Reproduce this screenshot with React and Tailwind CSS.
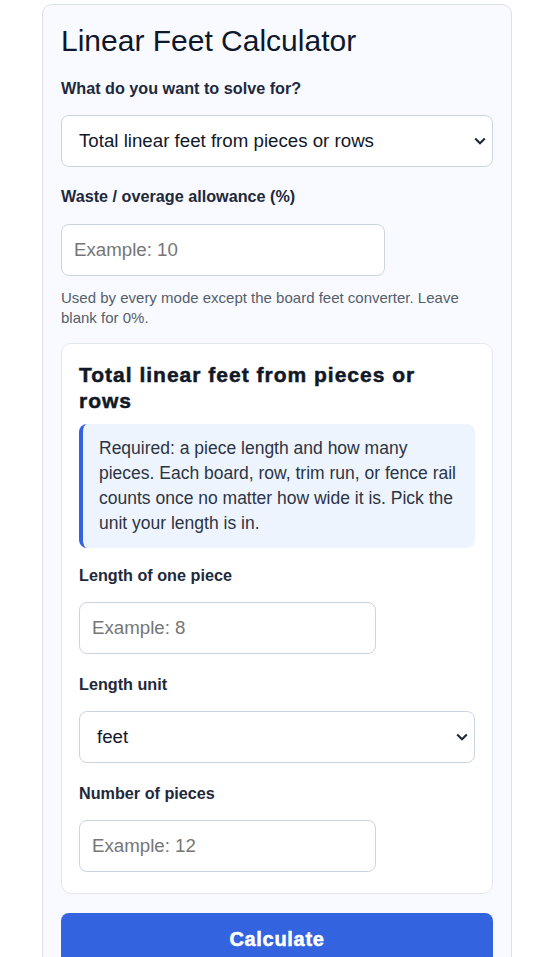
import { useState } from "react";

const inputCls =
  "block w-3/4 h-[52px] rounded-[8px] border border-[#cbd5e1] bg-white px-[12px] text-[18.7px] text-[#111827] placeholder:text-[#767676] outline-none";
const selectCls =
  "block w-full h-[52px] appearance-none rounded-[8px] border border-[#cbd5e1] bg-white pl-[17px] pr-8 text-[18.7px] text-[#111827] outline-none";
const labelCls = "block text-[16.2px] leading-[18px] font-bold text-[#1e293b]";

function Chevron() {
  return (
    <svg
      className="pointer-events-none absolute right-[7px] top-1/2 -translate-y-1/2"
      width="12"
      height="8"
      viewBox="0 0 12 8"
      fill="none"
    >
      <path d="M1.2 1.5 6 6.2 10.8 1.5" stroke="#1f2937" strokeWidth="2.1" />
    </svg>
  );
}

function Select({ className, value, onChange, children }) {
  return (
    <div className={`relative ${className}`}>
      <select className={selectCls} value={value} onChange={onChange}>
        {children}
      </select>
      <Chevron />
    </div>
  );
}

export default function App() {
  const [mode, setMode] = useState("pieces");
  const [unit, setUnit] = useState("feet");

  return (
    <div className="min-h-screen bg-white font-['Liberation_Sans',Arial,sans-serif]">
      <div className="ml-[42px] mt-[4px] w-[470px] rounded-[10px] border border-[#dbe2ea] bg-[#f8faff] px-[18px] pt-[18px] pb-10">
        <h1 className="text-[30px] leading-[36px] font-normal text-[#0f172a]">
          Linear Feet Calculator
        </h1>

        <label className={`${labelCls} mt-[20px]`}>What do you want to solve for?</label>
        <Select className="mt-[18px]" value={mode} onChange={(e) => setMode(e.target.value)}>
          <option value="pieces">Total linear feet from pieces or rows</option>
          <option value="area">Linear feet to cover an area</option>
          <option value="board">Board feet converter</option>
        </Select>

        <label className={`${labelCls} mt-[20px]`}>Waste / overage allowance (%)</label>
        <input className={`${inputCls} mt-[19px]`} placeholder="Example: 10" />
        <p className="mt-[12px] text-[15px] leading-[20px] text-[#555e6b]">
          Used by every mode except the board feet converter. Leave blank for 0%.
        </p>

        <div className="mt-[15px] rounded-[10px] border border-[#e2e8f0] bg-white px-[17px] pt-[18px] pb-[21px]">
          <h2 className="text-[21px] leading-[26px] font-bold tracking-[1px] text-[#111827] [-webkit-text-stroke:0.5px_#111827]">
            Total linear feet from pieces or rows
          </h2>
          <div className="mt-[10px] rounded-[8px] border-l-4 border-[#3563e0] bg-[#eef4fe] py-3 pl-4 pr-4 text-[17.5px] leading-[25px] text-[#2b3443]">
            Required: a piece length and how many
            <br />
            pieces. Each board, row, trim run, or fence rail counts once no matter how wide
            it is. Pick the unit your length is in.
          </div>

          <label className={`${labelCls} mt-[18px]`}>Length of one piece</label>
          <input className={`${inputCls} mt-[18px]`} placeholder="Example: 8" />

          <label className={`${labelCls} mt-[21px]`}>Length unit</label>
          <Select className="mt-[18px]" value={unit} onChange={(e) => setUnit(e.target.value)}>
            <option value="feet">feet</option>
            <option value="inches">inches</option>
            <option value="meters">meters</option>
          </Select>

          <label className={`${labelCls} mt-[21px]`}>Number of pieces</label>
          <input className={`${inputCls} mt-[18px]`} placeholder="Example: 12" />
        </div>

        <button className="mt-[19px] block h-[52px] w-full rounded-[8px] bg-[#3463e0] text-[20px] font-bold tracking-[0.7px] text-white [-webkit-text-stroke:0.5px_#ffffff]">
          Calculate
        </button>
      </div>
    </div>
  );
}
